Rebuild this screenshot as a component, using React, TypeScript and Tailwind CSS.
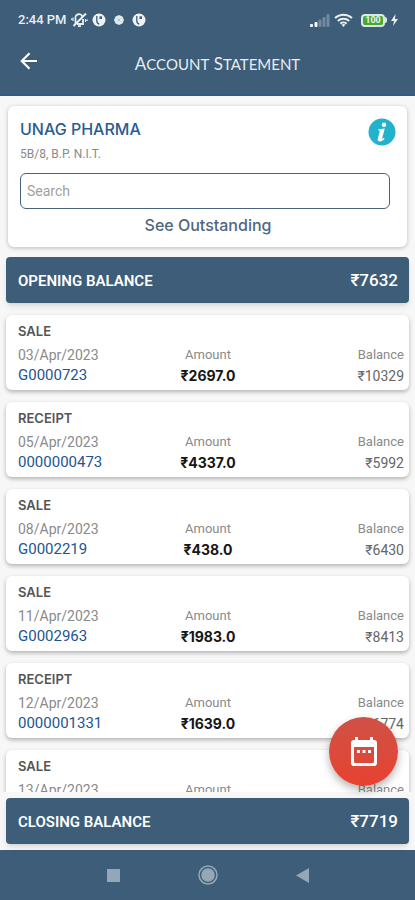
import React, { useState } from "react"

type Entry = {
    type: string
    date: string
    number: string
    amount: string
    balance: string
}

const entries: Entry[] = [
    { type: "SALE", date: "03/Apr/2023", number: "G0000723", amount: "2697.0", balance: "10329" },
    { type: "RECEIPT", date: "05/Apr/2023", number: "0000000473", amount: "4337.0", balance: "5992" },
    { type: "SALE", date: "08/Apr/2023", number: "G0002219", amount: "438.0", balance: "6430" },
    { type: "SALE", date: "11/Apr/2023", number: "G0002963", amount: "1983.0", balance: "8413" },
    { type: "RECEIPT", date: "12/Apr/2023", number: "0000001331", amount: "1639.0", balance: "6774" },
    { type: "SALE", date: "13/Apr/2023", number: "G0003107", amount: "945.0", balance: "7719" },
]

const AppBadge = () => (
    <svg width="14" height="14" viewBox="0 0 14 14">
        <circle cx="7" cy="7" r="6.5" fill="#eef3f7" />
        <path d="M4.800 3v4.800c0 1.700.9 2.900 2.400 3.200" fill="none" stroke="#3d5d78" strokeWidth="1.300" />
        <path d="M7.500 3.300h2.500v2.700H7.500z" fill="#3d5d78" />
    </svg>
)

const StatusBar = () => (
    <div className="flex h-10 items-center justify-between pl-[18px] pr-[17px] text-[#e8eff5]">
        <div className="flex items-center">
            <span className="text-[13px] font-medium">2:44 PM</span>
            <svg className="ml-1" width="17" height="16" viewBox="0 0 17 16" fill="none" stroke="currentColor" strokeWidth="1.800">
                <path d="M4.500 11.500V6.500a3.500 3.500 0 0 1 7-1.500M12 7v5H6M7 14.200h3" />
                <path d="M15 1.500 2.500 14" strokeWidth="2" />
                <path d="M2 5.500v3.500M.6 6.500v1.500M14.500 7v3M16.200 7.500v1.500" strokeWidth="1.200" />
            </svg>
            <div className="ml-1 flex items-center gap-2">
                <AppBadge />
                <svg width="10" height="10" viewBox="0 0 10 10">
                    <path d="M5 0 8.500 1.500 10 5 8.500 8.500 5 10 1.500 8.500 0 5 1.500 1.500z" fill="#dfe8ef" />
                    <path d="M3.500 3.500l3 3M6.500 3.500l-3 3" stroke="#b4c3d0" />
                </svg>
                <AppBadge />
            </div>
        </div>
        <div className="flex items-center gap-1">
            <svg width="20" height="13" viewBox="0 0 20 13">
                <rect x="0" y="10" width="3" height="3" rx="1" fill="#f4f8fb" />
                <rect x="4.500" y="8" width="3" height="5" rx="1" fill="#f4f8fb" />
                <rect x="8.500" y="5.500" width="3" height="7.500" rx="1" fill="#7289a0" />
                <rect x="12.500" y="3" width="3" height="10" rx="1" fill="#7289a0" />
                <rect x="16.500" y="0" width="3" height="13" rx="1" fill="#7289a0" />
            </svg>
            <svg width="19" height="14" viewBox="0 0 19 14" fill="none" stroke="currentColor" strokeWidth="2">
                <path d="M1 5a12.500 12.500 0 0 1 17 0M3.800 8a8.500 8.500 0 0 1 11.400 0M6.400 10.700a4.600 4.600 0 0 1 6.200 0" />
                <path d="M9.500 14 7.600 11.700a3 3 0 0 1 3.800 0z" fill="currentColor" stroke="none" />
            </svg>
            <div className="flex items-center pl-1">
                <div className="flex h-[13px] w-6 items-center justify-center rounded border-2 border-[#dce8e6] bg-[#48a834] text-[9px] font-bold leading-none">100</div>
                <div className="h-1.5 w-0.5 rounded-r bg-[#dce8e6]" />
            </div>
            <svg width="7" height="12" viewBox="0 0 7 12">
                <path d="M4.500 0 0 7h3l-1 5 5-7H4z" fill="currentColor" />
            </svg>
        </div>
    </div>
)

const BalanceBar = ({ label, value }: { label: string; value: string }) => (
    <div className="mx-1.5 flex h-[46px] shrink-0 items-center justify-between rounded bg-[#3d5d78] pl-3 pr-[11px] pt-0.5 text-white shadow-md">
        <span className="text-[15px] font-semibold">{label}</span>
        <span className="text-[17px] font-medium">₹{value}</span>
    </div>
)

const EntryCard = ({ entry }: { entry: Entry }) => (
    <li className="h-[75px] shrink-0 rounded-md bg-white pl-3 pr-[5px] pt-1.5 shadow-[0_2px_4px_rgba(0,0,0,0.28)]">
        <h2 className="font-[Inter,sans-serif] text-[13px] font-semibold leading-5 text-[#555555]">{entry.type}</h2>
        <div className="mt-1 grid grid-cols-3">
            <div>
                <p className="text-sm leading-5 text-[#8a8a8a]">{entry.date}</p>
                <a href="#" className="block text-[15px] leading-5 text-[#1d5590]">{entry.number}</a>
            </div>
            <div className="pr-1.5 text-center">
                <p className="text-[13px] leading-5 text-[#8a8a8a]">Amount</p>
                <p className="font-[Inter,sans-serif] text-sm font-bold leading-[22px] text-[#161616]">₹{entry.amount}</p>
            </div>
            <div className="text-right">
                <p className="text-[13px] leading-5 text-[#8a8a8a]">Balance</p>
                <p className="text-sm leading-[22px] text-[#666666]">₹{entry.balance}</p>
            </div>
        </div>
    </li>
)

const App = () => {
    const [search, setSearch] = useState("")

    return (
        <div className="flex h-screen flex-col bg-[#f7f7f8] font-[Roboto,sans-serif]">
            <header className="h-24 shrink-0 border-b-2 border-[#2f5b86] bg-[#3d5d78]">
                <StatusBar />
                <div className="grid grid-cols-[56px_1fr_36px] items-center pt-1">
                    <button type="button" aria-label="Back" className="ml-5 w-5 text-white">
                        <svg width="18" height="18" viewBox="0 0 18 18" fill="none" stroke="currentColor" strokeWidth="2.200">
                            <path d="M17 9H2M9.500 1.200 1.800 9l7.700 7.800" />
                        </svg>
                    </button>
                    <h1 className="pt-1.5 text-center font-[Lato,sans-serif] text-[17px] leading-7 text-[#e6edf3]">
                        A<span className="text-[15px]">CCOUNT</span> S<span className="text-[15px]">TATEMENT</span>
                    </h1>
                </div>
            </header>

            <main className="relative flex min-h-0 flex-1 flex-col pb-1.5 pt-2.5">
                <section className="mx-2 h-[141px] shrink-0 rounded-md bg-white pl-3 pr-[17px] pt-3 shadow-[0_1px_4px_rgba(0,0,0,0.25)]">
                    <div className="flex justify-between">
                        <div>
                            <h2 className="font-[Inter,sans-serif] text-base font-medium leading-[22px] text-[#2a5c8f]">UNAG PHARMA</h2>
                            <p className="mt-1 text-xs leading-5 text-[#8a8a8a]">5B/8, B.P. N.I.T.</p>
                        </div>
                        <button type="button" aria-label="Info" className="-mr-1.5 h-7 w-7">
                            <svg width="28" height="28" viewBox="0 0 28 28">
                                <circle cx="14" cy="14" r="13.500" fill="#22b2cc" />
                                <circle cx="16" cy="6.700" r="2.200" fill="#fff" />
                                <path d="M10.300 11.200l6.500-.7-2.600 9.600c-.2.900.4.900 1.600-.4l.8.700c-1.700 2.300-3.300 3.100-4.900 3-1.700-.1-2.300-1.200-1.900-2.800l1.900-7.100c.2-.9-.2-1.100-1.600-1.200z" fill="#fff" />
                            </svg>
                        </button>
                    </div>
                    <input
                        type="text"
                        aria-label="Search"
                        placeholder="Search"
                        value={search}
                        onChange={(e) => setSearch(e.target.value)}
                        className="mt-[9px] block h-9 w-full rounded-md border border-[#47637e] bg-white px-1.5 text-sm text-[#555555] placeholder:text-[#a0a0a0]"
                    />
                    <button type="button" className="mx-auto block pl-1.5 pt-[5px] font-[Inter,sans-serif] text-base font-medium leading-[22px] text-[#4f677f]">
                        See Outstanding
                    </button>
                </section>

                <div className="h-2.5 shrink-0" />
                <BalanceBar label="OPENING BALANCE" value="7632" />

                <ul className="mb-1.5 mt-2 flex min-h-0 flex-1 flex-col gap-3 overflow-y-auto px-1.5 pt-1 [scrollbar-width:none]">
                    {entries.map((entry) => (
                        <EntryCard key={entry.number} entry={entry} />
                    ))}
                </ul>

                <BalanceBar label="CLOSING BALANCE" value="7719" />

                <button
                    type="button"
                    aria-label="Choose dates"
                    className="absolute bottom-16 right-[17px] flex h-[69px] w-[69px] items-center justify-center rounded-full bg-linear-to-b from-[#cf5146] to-[#e8412f] shadow-[0_4px_8px_rgba(0,0,0,0.3)]"
                >
                    <svg width="28" height="31" viewBox="0 0 28 31">
                        <path d="M5 1h3v3h12V1h3v3h1a3 3 0 0 1 3 3v20a3 3 0 0 1-3 3H4a3 3 0 0 1-3-3V7a3 3 0 0 1 3-3h1zM4 11v14.500a1.500 1.500 0 0 0 1.500 1.500h17a1.500 1.500 0 0 0 1.500-1.500V11z" fill="#fff" fillRule="evenodd" />
                        <path d="M7 14h3v3H7zM12.500 14h3v3h-3zM18 14h3v3h-3z" fill="#fff" />
                    </svg>
                </button>
            </main>

            <nav className="flex h-[50px] shrink-0 items-center justify-center gap-[78px] bg-[#3d5d78]">
                <button type="button" aria-label="Recent apps" className="h-[13px] w-[13px] bg-[#93a7b7]" />
                <button type="button" aria-label="Home">
                    <svg width="20" height="20" viewBox="0 0 20 20">
                        <circle cx="10" cy="10" r="9" fill="none" stroke="#93a7b7" strokeWidth="1.500" />
                        <circle cx="10" cy="10" r="6.800" fill="#93a7b7" />
                    </svg>
                </button>
                <button type="button" aria-label="Navigate back">
                    <svg width="13" height="15" viewBox="0 0 13 15">
                        <path d="M13 0v15L0 7.500z" fill="#93a7b7" />
                    </svg>
                </button>
            </nav>
        </div>
    )
}

export default App
